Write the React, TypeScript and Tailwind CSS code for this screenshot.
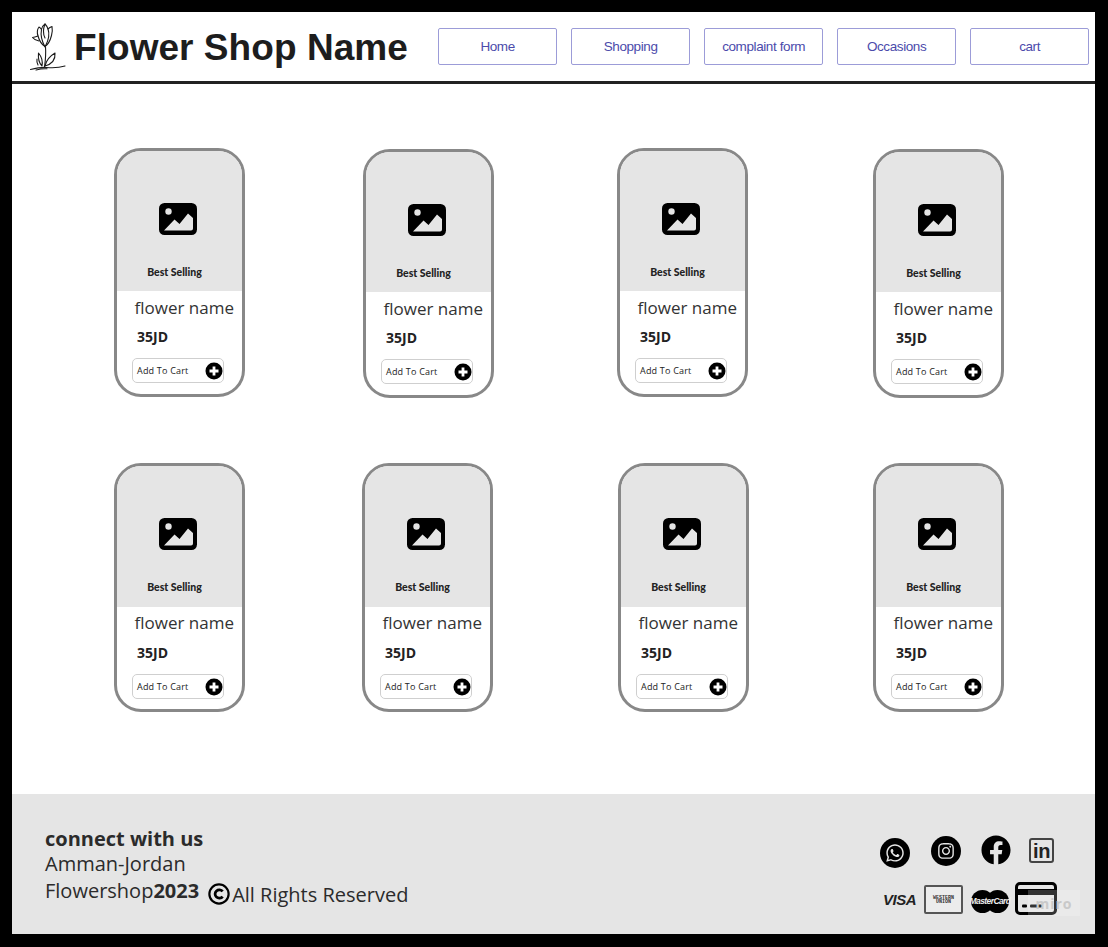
import { FaFacebook, FaInstagram, FaWhatsapp } from "react-icons/fa";

const navItems = ["Home", "Shopping", "complaint form", "Occasions", "cart"];

const rowOne = ["ml-0 mt-0", "ml-[118px] mt-px", "ml-[123px] mt-0", "ml-[125px] mt-px"];
const rowTwo = ["ml-0", "ml-[117px]", "ml-[125px]", "ml-[124px]"];

function FlowerLogo() {
  return (
    <svg viewBox="0 0 36 48" className="h-[48px] w-[36px] shrink-0" fill="none" stroke="#1a1a1a" strokeWidth="1.100" strokeLinecap="round" strokeLinejoin="round">
      <path d="M8 13c-1-3-.5-7 1-9 1 .5 2 1.500 2.500 2.500C12 4 13.500 2 15 1c1.500 1.500 2.500 3.500 3 5 1-1 2.500-2 4-2.500 .5 3 .5 6-.5 9-1 4-3.500 9-6.500 11-3.500-2-6-7-7-10.500z" />
      <path d="M11.500 6.500c-1 5 0 11 3.500 17.500M15 1c-2 5-2 10 0 14M18 6c1.500 4 1 10-2.500 17" />
      <path d="M8 13c-2 .5-4 1.500-5.500 1.500 1.500 2 4 3 6.500 3.500" />
      <path d="M15.500 24c.5 6 0 13-1 20" />
      <path d="M12 43c-3-3-4-8-3.500-13 2.500 3 4.500 8 3.500 13zM15 43c1-5 5-10 10-13 .5 6-3 11-10 13zM8 42c-1-2-1.500-3.500-1-6" />
      <path d="M0.500 46.500c6-1.500 11-2.500 16-2 6 .5 12 .5 18.500-1.500M6 47c4-1 8-1.500 11-1.200" />
    </svg>
  );
}

function ImageIcon() {
  return (
    <svg viewBox="0 0 38 32" className="h-[32px] w-[38px]">
      <rect width="38" height="32" rx="5.500" fill="#000" />
      <circle cx="9.500" cy="8.500" r="3.200" fill="#e5e5e5" />
      <path d="M5 27.500 15.500 16.500 20.500 21 29 10.500 34 15v10.500a2 2 0 0 1-2 2z" fill="#e5e5e5" />
    </svg>
  );
}

function CopyrightIcon() {
  return (
    <svg viewBox="0 0 24 24" className="h-[22px] w-[22px] shrink-0" fill="none" stroke="#000" strokeWidth="2.400">
      <circle cx="12" cy="12" r="10.500" />
      <path d="M16 9.200A4.600 4.600 0 1 0 16 14.800" strokeWidth="3" />
    </svg>
  );
}

function LinkedinBox() {
  return (
    <div className="flex h-[25px] w-[25px] items-center justify-center rounded-[3px] border-2 border-[#444]">
      <span className="font-['Liberation_Sans',sans-serif] text-[20px] font-bold leading-none tracking-[-0.5px] text-[#222]">in</span>
    </div>
  );
}

function CardIcon() {
  return (
    <svg viewBox="0 0 42 33" className="h-[33px] w-[42px]">
      <rect x="1.500" y="1.500" width="39" height="30" rx="3.500" fill="#e5e5e5" stroke="#000" strokeWidth="3" />
      <rect x="2" y="7" width="38" height="6" fill="#000" />
      <rect x="7" y="22.500" width="5" height="3" rx="1" fill="#000" />
      <rect x="15" y="22.500" width="12" height="3" rx="1" fill="#000" />
    </svg>
  );
}

function MasterCard() {
  return (
    <div className="relative h-[23px] w-[38px]">
      <div className="absolute left-0 top-0 h-[23px] w-[23px] rounded-full bg-black" />
      <div className="absolute right-0 top-0 h-[23px] w-[23px] rounded-full bg-black" />
      <span className="absolute inset-0 flex items-center justify-center font-['Liberation_Sans',sans-serif] text-[8.500px] font-bold italic leading-none tracking-[-0.6px] text-[#eeeeee]">MasterCard</span>
    </div>
  );
}

function ProductCard({ offset, tall }: { offset: string; tall?: boolean }) {
  return (
    <div className={`h-[249px] w-[131px] shrink-0 overflow-hidden rounded-[27px] border-[3px] border-[#888888] bg-white ${offset}`}>
      <div className={`flex flex-col items-center bg-[#e5e5e5] pr-[4px] pt-[52px] ${tall ? "h-[141px]" : "h-[140px]"}`}>
        <ImageIcon />
        <p className="mt-[30px] -translate-x-[3px] whitespace-nowrap font-['Lato',sans-serif] text-[10.500px] font-black leading-[14px] text-[#222]">Best Selling</p>
      </div>
      <p className={`ml-[17.500px] whitespace-nowrap text-[17px] leading-[24px] text-[#333] ${tall ? "mt-[4px]" : "mt-[5px]"}`}>flower name</p>
      <p className={`ml-[20px] text-[14px] font-bold leading-[19px] text-[#222] ${tall ? "mt-[8px]" : "mt-[7px]"}`}>35JD</p>
      <div className="ml-[15px] mt-[12px] flex h-[25px] w-[92px] items-center justify-between rounded-[5px] border border-[#cfcfcf] pl-[4px]">
        <span className="text-[9px] leading-none tracking-[0.2px] text-[#222]">Add To Cart</span>
        <svg viewBox="0 0 18 18" className="h-[18px] w-[18px]">
          <circle cx="9" cy="9" r="8.500" fill="#000" />
          <path d="M9 4.500v9M4.500 9h9" stroke="#fff" strokeWidth="2.800" />
        </svg>
      </div>
    </div>
  );
}

export default function App() {
  return (
    <div className="h-[947px] w-[1108px] bg-black pb-[13px] pl-[12px] pr-[13px] pt-[12px] font-['Open_Sans',sans-serif]">
      <div className="flex h-full flex-col bg-white">
        <header className="flex h-[72px] shrink-0 items-center border-b-[3px] border-[#222] pl-[18px]">
          <FlowerLogo />
          <h1 className="ml-[8px] translate-y-px whitespace-nowrap font-['Liberation_Sans',sans-serif] text-[37px] font-bold leading-none tracking-[0.05px] text-[#1d1d1d]">Flower Shop Name</h1>
          <nav className="ml-[30px] flex gap-[13.500px]">
            {navItems.map((item) => (
              <a key={item} className="flex h-[37px] w-[119.500px] items-center justify-center rounded-[2px] border border-[#9c9cd8] pt-px font-['Liberation_Sans',sans-serif] text-[13.500px] tracking-[-0.4px] text-[#4b4bab]">
                {item}
              </a>
            ))}
          </nav>
        </header>

        <main className="flex-1 pl-[102px] pt-[64px]">
          <div className="flex h-[250px] items-start">
            {rowOne.map((offset, i) => (
              <ProductCard key={i} offset={offset} />
            ))}
          </div>
          <div className="mt-[65px] flex items-start">
            {rowTwo.map((offset, i) => (
              <ProductCard key={i} offset={offset} tall />
            ))}
          </div>
        </main>

        <footer className="relative flex h-[140px] shrink-0 justify-between bg-[#e5e5e5] pl-[33px] pr-[37px]">
          <div className="pt-[31px] text-[20px] leading-[27px] text-[#2b2b2b]">
            <p className="font-bold">connect with us</p>
            <p className="-mt-[2px]">Amman-Jordan</p>
            <div className="flex items-center">
              <span>Flowershop<b>2023</b></span>
              <span className="ml-[9px] translate-y-[3px]"><CopyrightIcon /></span>
              <span className="ml-[2px] translate-y-[4px]">All Rights Reserved</span>
            </div>
          </div>
          <div className="flex w-[180px] flex-col items-end pt-[41px]">
            <div className="mr-[4px] flex h-[33px] w-[174px] items-start">
              <div className="mt-[3px] flex h-[30px] w-[30px] items-center justify-center rounded-full bg-black">
                <FaWhatsapp className="h-[20px] w-[20px] text-[#e5e5e5]" />
              </div>
              <div className="ml-[21px] mt-px flex h-[30px] w-[30px] items-center justify-center rounded-full bg-black">
                <FaInstagram className="h-[18px] w-[18px] text-[#e5e5e5]" />
              </div>
              <FaFacebook className="ml-[20px] h-[30px] w-[30px] text-black" />
              <div className="ml-[18px] mt-[3px]"><LinkedinBox /></div>
            </div>
            <div className="mt-[14px] flex w-[176px] items-start">
              <span className="ml-px mt-[10px] w-[33px] font-['Liberation_Sans',sans-serif] text-[15px] font-bold italic leading-none tracking-[-0.5px] text-[#222]">VISA</span>
              <div className="ml-[8px] mt-[3px] flex h-[29px] w-[39px] flex-col items-center justify-center rounded-[2px] border-2 border-[#555] bg-[#ececec] font-['Liberation_Mono',monospace] text-[5px] font-bold leading-[4px] text-[#333]">
                <span>WESTERN</span>
                <span>UNION</span>
              </div>
              <div className="ml-[8px] mt-[8px]"><MasterCard /></div>
              <div className="ml-[6px]"><CardIcon /></div>
            </div>
          </div>
          <div className="absolute bottom-[18px] right-[15px] flex h-[26px] w-[52px] items-center justify-center bg-white/20 text-[14px] font-bold tracking-[1px] text-[#c9c9c9]">miro</div>
        </footer>
      </div>
    </div>
  );
}
